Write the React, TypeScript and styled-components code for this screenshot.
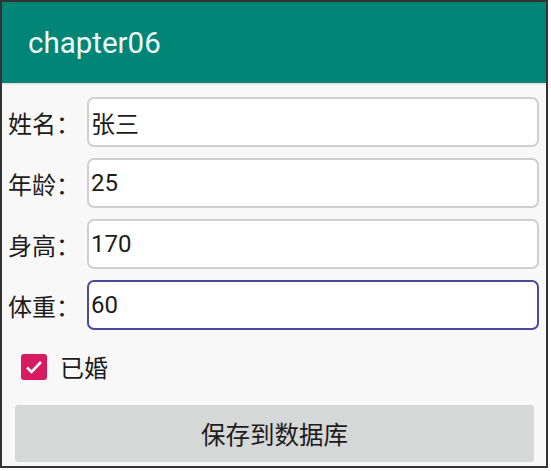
import React, { useState } from 'react';
import styled, { createGlobalStyle } from 'styled-components';

const GlobalStyle = createGlobalStyle`
  html, body {
    margin: 0;
    padding: 0;
    background: #ffffff;
  }
  body {
    font-family: Roboto, "Noto Sans CJK SC", sans-serif;
  }
`;

const Frame = styled.div`
  box-sizing: border-box;
  width: 548px;
  height: 468px;
  border: 2px solid #333333;
  background: #f8f8f8;
  display: flex;
  flex-direction: column;
  overflow: hidden;
`;

const AppBar = styled.header`
  height: 81px;
  flex-shrink: 0;
  display: flex;
  align-items: center;
  padding-left: 26px;
  background: #008577;
  box-shadow: 0 1px 2px rgba(0, 0, 0, 0.15);
`;

const Title = styled.h1`
  margin: 0;
  font-family: Roboto, sans-serif;
  font-weight: 400;
  font-size: 29.5px;
  color: #eef8f6;
`;

const Form = styled.div`
  display: flex;
  flex-direction: column;
  gap: 11px;
  padding: 14px 7px 0 6px;
`;

const Row = styled.div`
  display: flex;
  align-items: center;
  height: 50px;
`;

const Label = styled.label`
  width: 79px;
  flex-shrink: 0;
  font-family: "Noto Sans CJK SC", sans-serif;
  font-size: 24px;
  color: #1c1c1c;
  white-space: nowrap;
`;

const Field = styled.input<{ $focused?: boolean }>`
  box-sizing: border-box;
  flex: 1;
  min-width: 0;
  height: 50px;
  padding: 0 2px;
  border: ${p => (p.$focused ? '2px solid #4b4b9c' : '2px solid #cfcfcf')};
  border-radius: 7px;
  background: #ffffff;
  font-family: Roboto, "Noto Sans CJK SC", sans-serif;
  font-size: 24px;
  color: #1c1c1c;
  outline: none;
`;

const CheckRow = styled.label`
  display: flex;
  align-items: center;
  gap: 13px;
  margin: 23px 0 0 19px;
  height: 27px;
  font-family: "Noto Sans CJK SC", sans-serif;
  font-size: 24px;
  color: #1c1c1c;
`;

const Box = styled.span<{ $checked: boolean }>`
  width: 26px;
  height: 26px;
  border-radius: 3px;
  display: flex;
  align-items: center;
  justify-content: center;
  box-sizing: border-box;
  background: ${p => (p.$checked ? '#d81b60' : 'transparent')};
  border: ${p => (p.$checked ? 'none' : '2px solid #666')};
`;

const SaveButton = styled.button`
  margin: 25px 12px 0 13px;
  height: 57px;
  border: none;
  border-radius: 3px;
  background: #d6d7d7;
  font-family: "Noto Sans CJK SC", sans-serif;
  font-size: 24.5px;
  color: #1c1c1c;
  cursor: pointer;
`;

const fields = [
  { label: '姓名：', value: '张三' },
  { label: '年龄：', value: '25' },
  { label: '身高：', value: '170' },
  { label: '体重：', value: '60', focused: true },
];

export default function App() {
  const [married, setMarried] = useState(true);

  return (
    <>
      <GlobalStyle />
      <Frame>
        <AppBar>
          <Title>chapter06</Title>
        </AppBar>
        <Form>
          {fields.map(f => (
            <Row key={f.label}>
              <Label>{f.label}</Label>
              <Field defaultValue={f.value} $focused={f.focused} />
            </Row>
          ))}
        </Form>
        <CheckRow onClick={() => setMarried(!married)}>
          <Box $checked={married}>
            {married && (
              <svg width="18" height="14" viewBox="0 0 18 14">
                <path d="M2 7.5 L6.5 12 L16 2" fill="none" stroke="#ffffff" strokeWidth="2.6" />
              </svg>
            )}
          </Box>
          已婚
        </CheckRow>
        <SaveButton>保存到数据库</SaveButton>
      </Frame>
    </>
  );
}
